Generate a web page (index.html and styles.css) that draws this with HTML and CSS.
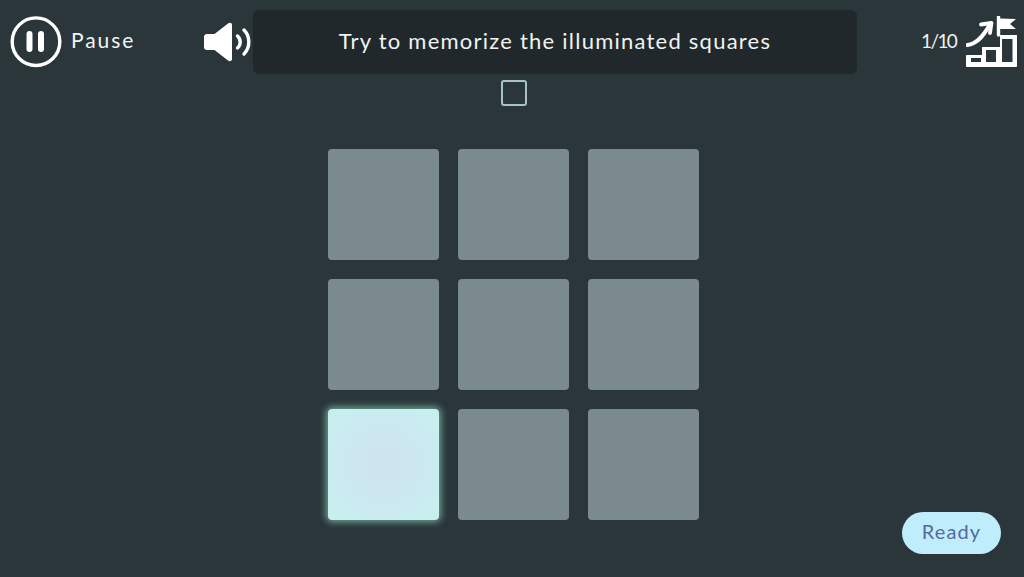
FILE: index.html
```html
<!DOCTYPE html>
<html lang="en">
<head>
<meta charset="utf-8">
<title>Memory game</title>
<link rel="stylesheet" href="styles.css">
</head>
<body>
<div class="app">
  <header class="top">
    <div class="left">
      <svg class="pause-icon" width="52" height="52" viewBox="0 0 52 52"><circle cx="26" cy="25.700" r="23.800" fill="none" stroke="#fff" stroke-width="3.400"/><rect x="16.500" y="15" width="6" height="21" rx="3" fill="#fff"/><rect x="28" y="15" width="6" height="21" rx="3" fill="#fff"/></svg>
      <span class="pause-label">Pause</span>
      <svg class="sound-icon" width="48" height="42" viewBox="0 0 48 42"><path d="M3 13h7.500L24 2.500c1.800-1.300 4-.6 4 1.500v34c0 2.100-2.200 2.800-4 1.500L10.500 29H3c-1.700 0-3-1.300-3-3V16c0-1.700 1.300-3 3-3z" fill="#fff"/><path d="M33.500 15c3.600 3.200 3.600 9 0 12" fill="none" stroke="#fff" stroke-width="3.400" stroke-linecap="round"/><path d="M40 9c6.400 6.500 6.400 17.500 0 24" fill="none" stroke="#fff" stroke-width="3.400" stroke-linecap="round"/></svg>
    </div>
    <div class="banner">Try to memorize the illuminated squares</div>
    <div class="right">
      <span class="count">1/10</span>
      <svg class="progress-icon" width="52" height="52" viewBox="0 0 52 52"><path fill-rule="evenodd" d="M1 39H16V31H34V19H51V50c0 .6-.4 1-1 1H1c-.6 0-1-.4-1-1V40c0-.6.400-1 1-1zM5 42V46H15V42zM20 34V46H30V34zM36 23V46H46.500V23z" fill="#fff"/><path d="M1.500 29C10 28 16 22 23 10" fill="none" stroke="#fff" stroke-width="4" stroke-linecap="round"/><path d="M15 8.500 25.500 7 24 17" fill="none" stroke="#fff" stroke-width="3.800" stroke-linecap="round" stroke-linejoin="round"/><path d="M32.500 19V1" stroke="#fff" stroke-width="3.400" stroke-linecap="round"/><path d="M34 2.500 50 3 44 8 50 13H34z" fill="#fff"/></svg>
    </div>
  </header>
  <div class="status"><span class="check"></span></div>
  <main class="board">
    <div class="cell"></div><div class="cell"></div><div class="cell"></div>
    <div class="cell"></div><div class="cell"></div><div class="cell"></div>
    <div class="cell lit"></div><div class="cell"></div><div class="cell"></div>
  </main>
  <footer class="bottom"><button class="ready">Ready</button></footer>
</div>
</body>
</html>
```
FILE: styles.css
```css
* { box-sizing: border-box; }
html, body { margin: 0; height: 100%; }
body { background: #2a3639; color: #fff; font-family: "Lato", "Noto Sans", sans-serif; overflow: hidden; }
.app { width: 1024px; height: 577px; display: flex; flex-direction: column; }
.top { display: flex; align-items: flex-start; height: 74px; padding-top: 10px; }
.left { flex: none; width: 253px; display: flex; align-items: flex-start; height: 62px; padding: 6px 0 0 10px; }
.pause-label { flex: none; margin: 11px 0 0 9px; font-size: 21px; letter-spacing: 1.95px; width: 133px; color: #f2f5f5; }
.pause-icon, .sound-icon, .progress-icon { flex: none; display: block; }
.sound-icon { margin-top: 5px; }
.banner { flex: none; width: 604px; height: 64px; padding-bottom: 4px; background: #20282b; border-radius: 6px; display: flex; align-items: center; justify-content: center; font-size: 22px; letter-spacing: 1.23px; color: #f0f3f3; }
.right { flex: 1; display: flex; align-items: flex-start; padding-left: 64px; }
.count { font-size: 19px; margin-top: 19px; width: 45px; letter-spacing: -1.6px; color: #eef1f1; }
.progress-icon { margin-top: 6px; }
.status { display: flex; justify-content: center; height: 75px; padding: 6px 0 0 4px; }
.check { width: 26px; height: 26px; border: 2px solid #a9c2c9; border-radius: 3px; }
.board { display: grid; grid-template-columns: repeat(3, 111px); grid-auto-rows: 111px; gap: 19px; justify-content: center; margin-left: 3px; }
.cell { background: #7a8a8f; border-radius: 4px; }
.lit { background: radial-gradient(circle at 50% 50%, #cfe3ef 0%, #cce7f0 40%, #c8eef0 78%); box-shadow: 0 0 7px 2px #6fa898; }
.bottom { flex: 1; display: flex; justify-content: flex-end; padding-right: 23px; }
.ready { width: 99px; height: 42px; margin-top: -8px; border: 0; border-radius: 21px; background: #c0edfc; color: #566a9e; font-family: inherit; font-size: 20px; letter-spacing: 1.1px; padding: 0 0 4px; }
```
